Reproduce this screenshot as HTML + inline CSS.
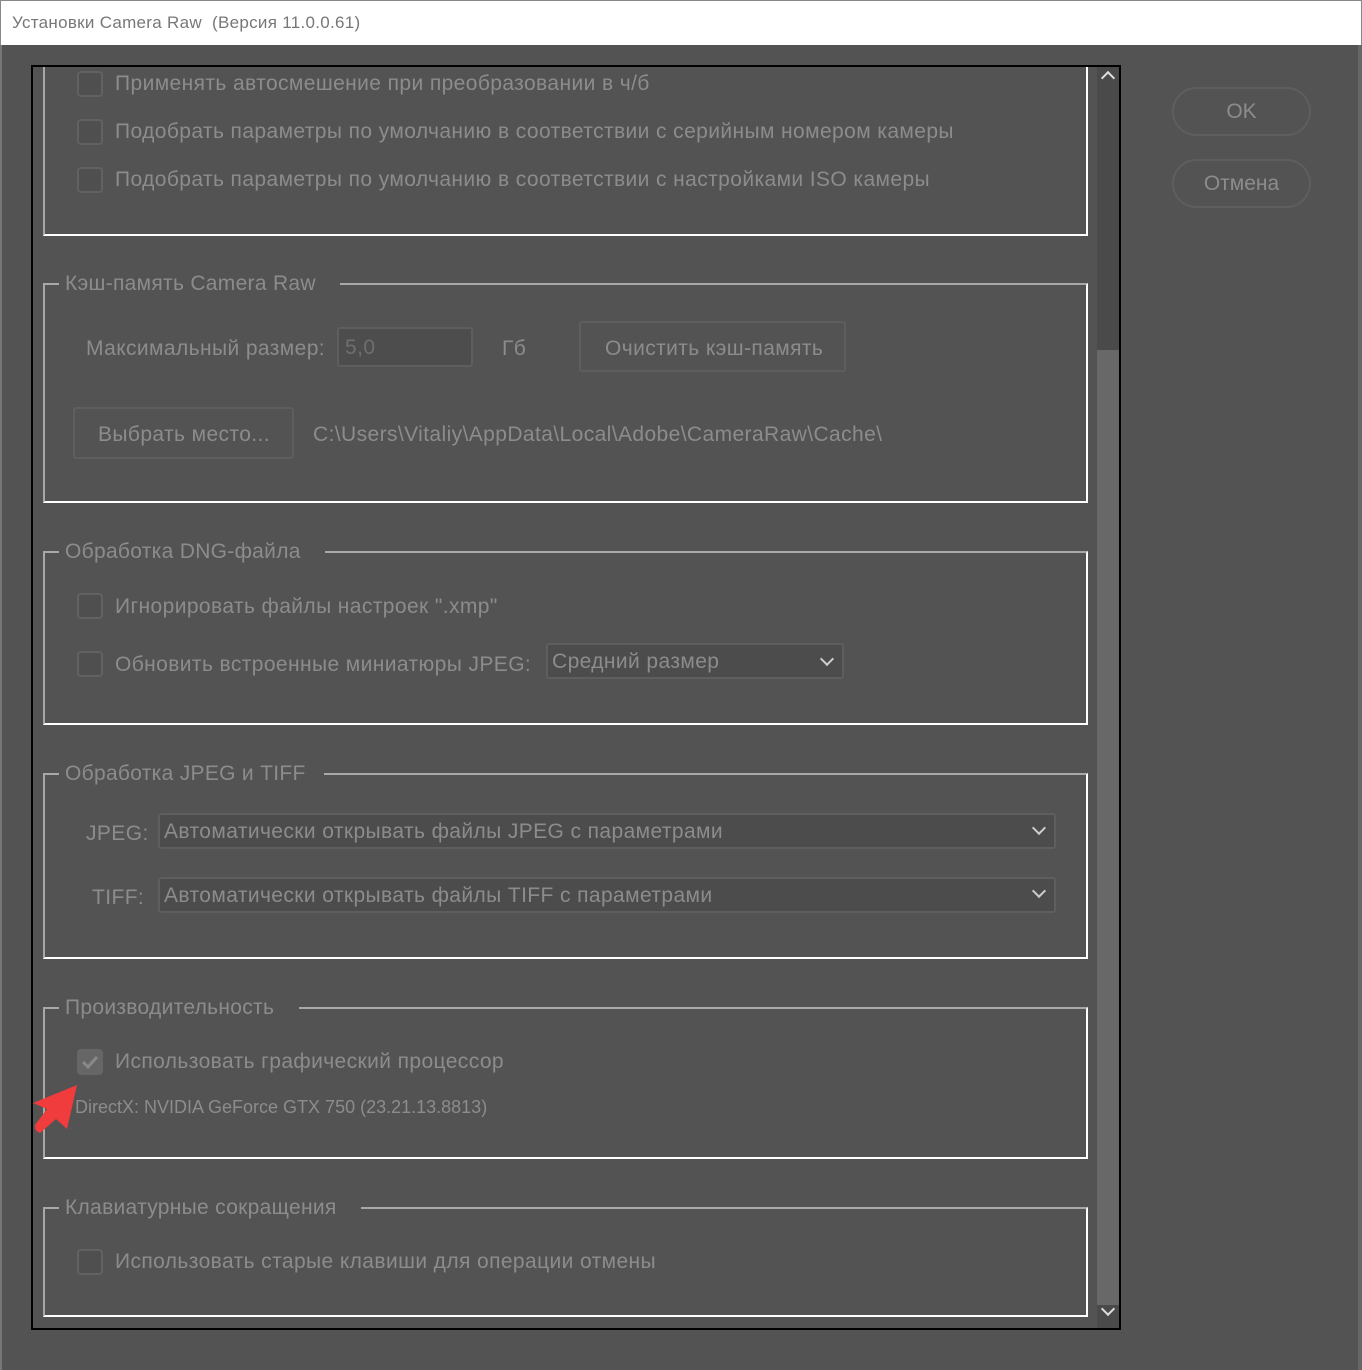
<!DOCTYPE html>
<html><head><meta charset="utf-8"><style>
*{margin:0;padding:0;box-sizing:border-box}
body{width:1362px;height:1370px;background:#535353;position:relative;overflow:hidden;font-family:"Liberation Sans","DejaVu Sans",sans-serif;color:#8c8c8c}
.a{position:absolute;white-space:nowrap}
.t{font-size:21px;line-height:24px;letter-spacing:0.4px}
.cb{position:absolute;width:26px;height:26px;border:2px solid #626262;border-radius:4px;background:#4f4f4f}
.gl{position:absolute;border-left:2px solid #a8a8a8;border-top:2px solid #a8a8a8;border-right:2px solid #fff;border-bottom:2px solid #fff}
.lg{position:absolute;background:#535353;padding:0 6px 0 6px;font-size:21px;line-height:24px;color:#8c8c8c;letter-spacing:0.3px}
.box{position:absolute;background:#4c4c4c;border:2px solid #5e5e5e;border-radius:3px}
.chev{position:absolute;width:10px;height:10px;border-right:2px solid #ccc;border-bottom:2px solid #ccc;transform:rotate(45deg)}
.btn{position:absolute;border:2px solid #5e5e5e;border-radius:26px;text-align:center;font-size:21px;color:#8c8c8c}
</style></head><body>
<div class="a" style="left:0;top:0;width:1362px;height:45px;background:#fff;border:1px solid #888;border-bottom:none"></div>
<div class="a" style="left:12px;top:13px;font-size:17px;color:#777;letter-spacing:0.3px">Установки Camera Raw&nbsp; (Версия 11.0.0.61)</div>
<div class="a" style="left:0;top:45px;width:2px;height:1325px;background:#777"></div>
<div class="a" style="left:1358px;top:45px;width:4px;height:1325px;background:#666"></div>

<div class="a" style="left:31px;top:65px;width:1090px;height:1265px;border:2px solid #000"></div>
<div class="a" style="left:1097px;top:67px;width:22px;height:283px;background:#4a4a4a"></div>
<div class="a" style="left:1097px;top:350px;width:22px;height:955px;background:#686868"></div>
<div class="a" style="left:1097px;top:1305px;width:22px;height:23px;background:#4a4a4a"></div>
<div class="chev" style="left:1103px;top:73px;transform:rotate(-135deg);border-color:#ddd"></div>
<div class="chev" style="left:1103px;top:1304px;border-color:#ddd"></div>

<div class="gl" style="left:43px;top:67px;width:1045px;height:169px;border-top:none"></div>
<div class="cb" style="left:77px;top:71px"></div><div class="a t" style="left:115px;top:72px">Применять автосмешение при преобразовании в ч/б</div>
<div class="cb" style="left:77px;top:119px"></div><div class="a t" style="left:115px;top:120px">Подобрать параметры по умолчанию в соответствии с серийным номером камеры</div>
<div class="cb" style="left:77px;top:167px"></div><div class="a t" style="left:115px;top:168px">Подобрать параметры по умолчанию в соответствии с настройками ISO камеры</div>

<div class="gl" style="left:43px;top:283px;width:1045px;height:220px"></div>
<div class="lg" style="left:59px;top:272px">Кэш-память Camera Raw&nbsp;&nbsp;&nbsp;</div>
<div class="a t" style="left:86px;top:337px">Максимальный размер:</div>
<div class="box" style="left:337px;top:327px;width:136px;height:40px;background:#4d4d4d"></div>
<div class="a t" style="left:345px;top:336px;color:#6e6e6e">5,0</div>
<div class="a t" style="left:502px;top:337px">Гб</div>
<div class="box" style="left:579px;top:321px;width:267px;height:51px;background:#535353"></div>
<div class="a t" style="left:605px;top:337px">Очистить кэш-память</div>
<div class="box" style="left:73px;top:407px;width:221px;height:52px;background:#535353"></div>
<div class="a t" style="left:98px;top:423px">Выбрать место...</div>
<div class="a t" style="left:313px;top:423px">C:\Users\Vitaliy\AppData\Local\Adobe\CameraRaw\Cache\</div>

<div class="gl" style="left:43px;top:551px;width:1045px;height:174px"></div>
<div class="lg" style="left:59px;top:540px">Обработка DNG-файла&nbsp;&nbsp;&nbsp;</div>
<div class="cb" style="left:77px;top:593px"></div><div class="a t" style="left:115px;top:595px">Игнорировать файлы настроек ".xmp"</div>
<div class="cb" style="left:77px;top:651px"></div><div class="a t" style="left:115px;top:653px">Обновить встроенные миниатюры JPEG:</div>
<div class="box" style="left:546px;top:643px;width:298px;height:36px"></div>
<div class="a t" style="left:552px;top:650px">Средний размер</div>
<div class="chev" style="left:822px;top:654px"></div>

<div class="gl" style="left:43px;top:773px;width:1045px;height:186px"></div>
<div class="lg" style="left:59px;top:762px">Обработка JPEG и TIFF&nbsp;&nbsp;</div>
<div class="a t" style="left:86px;top:822px">JPEG:</div>
<div class="box" style="left:158px;top:813px;width:898px;height:36px"></div>
<div class="a t" style="left:164px;top:820px">Автоматически открывать файлы JPEG с параметрами</div>
<div class="chev" style="left:1034px;top:823px"></div>
<div class="a t" style="left:92px;top:886px">TIFF:</div>
<div class="box" style="left:158px;top:877px;width:898px;height:36px"></div>
<div class="a t" style="left:164px;top:884px">Автоматически открывать файлы TIFF с параметрами</div>
<div class="chev" style="left:1034px;top:886px"></div>

<div class="gl" style="left:43px;top:1007px;width:1045px;height:152px"></div>
<div class="lg" style="left:59px;top:996px">Производительность&nbsp;&nbsp;&nbsp;</div>
<div class="cb" style="left:77px;top:1049px;background:#666;border-color:#666"></div>
<svg class="a" style="left:80px;top:1053px" width="20" height="18"><path d="M3 9 L8 14 L17 4" stroke="#888" stroke-width="3" fill="none"/></svg>
<div class="a t" style="left:115px;top:1050px">Использовать графический процессор</div>
<div class="a" style="left:75px;top:1097px;font-size:18px">DirectX: NVIDIA GeForce GTX 750 (23.21.13.8813)</div>
<svg class="a" style="left:30px;top:1083px" width="50" height="55"><path d="M47 2 L3 20 L17 26 L5 42 Q4 48 10 50 L26 36 L37 46 Z" fill="#f03c3c"/></svg>

<div class="gl" style="left:43px;top:1207px;width:1045px;height:110px"></div>
<div class="lg" style="left:59px;top:1196px">Клавиатурные сокращения&nbsp;&nbsp;&nbsp;</div>
<div class="cb" style="left:77px;top:1249px"></div><div class="a t" style="left:115px;top:1250px">Использовать старые клавиши для операции отмены</div>

<div class="btn" style="left:1172px;top:87px;width:139px;height:49px;line-height:45px">OK</div>
<div class="btn" style="left:1172px;top:159px;width:139px;height:49px;line-height:45px">Отмена</div>
</body></html>
